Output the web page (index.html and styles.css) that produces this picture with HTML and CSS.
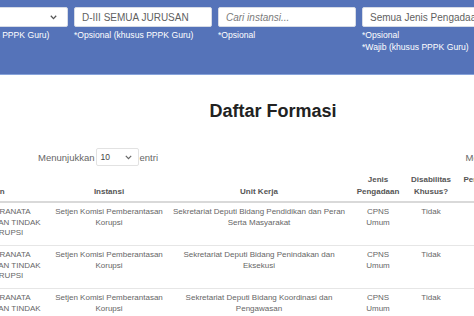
FILE: index.html
```html
<!DOCTYPE html>
<html lang="id">
<head>
<meta charset="utf-8">
<title>Daftar Formasi</title>
<link rel="stylesheet" href="styles.css">
</head>
<body>
<div class="page">
  <section class="filters">
    <div class="field">
      <div class="box select">
        <span class="val">Semua</span>
        <svg class="chev" width="7" height="5" viewBox="0 0 7 5"><path d="M0.8 0.8 L3.5 3.6 L6.2 0.8" fill="none" stroke="#555" stroke-width="1.3"/></svg>
      </div>
      <p class="hint">*Opsional (khusus PPPK Guru)</p>
    </div>
    <div class="field">
      <div class="box"><span class="val">D-III SEMUA JURUSAN</span></div>
      <p class="hint">*Opsional (khusus PPPK Guru)</p>
    </div>
    <div class="field">
      <div class="box"><span class="val ph">Cari instansi...</span></div>
      <p class="hint">*Opsional</p>
    </div>
    <div class="field">
      <div class="box select">
        <span class="val">Semua Jenis Pengadaan</span>
        <svg class="chev" width="7" height="5" viewBox="0 0 7 5"><path d="M0.8 0.8 L3.5 3.6 L6.2 0.8" fill="none" stroke="#555" stroke-width="1.3"/></svg>
      </div>
      <p class="hint">*Opsional</p>
      <p class="hint">*Wajib (khusus PPPK Guru)</p>
    </div>
  </section>

  <h1 class="title">Daftar Formasi</h1>

  <div class="controls">
    <div class="length">
      <span>Menunjukkan</span>
      <span class="len-select">10
        <svg width="7" height="5" viewBox="0 0 7 5"><path d="M0.8 0.8 L3.5 3.6 L6.2 0.8" fill="none" stroke="#666" stroke-width="1.2"/></svg>
      </span>
      <span>entri</span>
    </div>
    <div class="search">
      <span>Mencari:</span>
      <span class="search-box"></span>
    </div>
  </div>

  <table class="formasi">
    <thead>
      <tr>
        <th class="c1">Jabatan</th>
        <th class="c2">Instansi</th>
        <th class="c3">Unit Kerja</th>
        <th class="c4">Jenis Pengadaan</th>
        <th class="c5">Disabilitas Khusus?</th>
        <th class="c6">Penghasilan (Rp)</th>
      </tr>
    </thead>
    <tbody>
      <tr>
        <td>PENYULUH PRANATA PEMBERANTASAN TINDAK PIDANA KORUPSI</td>
        <td>Setjen Komisi Pemberantasan Korupsi</td>
        <td>Sekretariat Deputi Bidang Pendidikan dan Peran Serta Masyarakat</td>
        <td>CPNS Umum</td>
        <td>Tidak</td>
        <td>-</td>
      </tr>
      <tr>
        <td>PENYULUH PRANATA PEMBERANTASAN TINDAK PIDANA KORUPSI</td>
        <td>Setjen Komisi Pemberantasan Korupsi</td>
        <td>Sekretariat Deputi Bidang Penindakan dan Eksekusi</td>
        <td>CPNS Umum</td>
        <td>Tidak</td>
        <td>-</td>
      </tr>
      <tr>
        <td>PENYULUH PRANATA PEMBERANTASAN TINDAK PIDANA KORUPSI</td>
        <td>Setjen Komisi Pemberantasan Korupsi</td>
        <td>Sekretariat Deputi Bidang Koordinasi dan Pengawasan</td>
        <td>CPNS Umum</td>
        <td>Tidak</td>
        <td>-</td>
      </tr>
    </tbody>
  </table>
</div>
</body>
</html>
```

FILE: styles.css
```css
html, body {
  margin: 0;
  padding: 0;
  background: #ffffff;
  overflow: hidden;
}

body {
  font-family: "Liberation Sans", Arial, sans-serif;
  color: #666;
}

.page {
  width: 706px;
  margin-left: -80px;
}

/* ---------- filter band ---------- */
.filters {
  box-sizing: border-box;
  height: 75px;
  background: #5573b9;
  border-bottom: 1px solid #87a3da;
  padding: 7px 0 0 10px;
  display: grid;
  grid-template-columns: repeat(4, 138px);
  column-gap: 6px;
  align-items: start;
}

.field {
  display: flex;
  flex-direction: column;
}

.box {
  box-sizing: border-box;
  height: 20px;
  background: #fff;
  border: 1px solid #d6dbe6;
  border-radius: 2px;
  padding: 0 7px;
  display: flex;
  align-items: center;
  justify-content: space-between;
  overflow: hidden;
  white-space: nowrap;
}

.val {
  font-size: 10px;
  color: #5f5f5f;
}

.val.ph {
  font-style: italic;
  color: #7a7a7a;
}

.chev {
  flex: none;
  margin-right: 3px;
}

.hint {
  margin: 0;
  font-size: 8.6px;
  line-height: 12px;
  color: #ffffff;
  white-space: nowrap;
}

.field .hint:first-of-type {
  margin-top: 2px;
}

/* ---------- title ---------- */
.title {
  margin: 25px 0 0;
  text-align: center;
  font-size: 18px;
  line-height: 22px;
  font-weight: bold;
  color: #222;
}

/* ---------- controls ---------- */
.controls {
  margin-top: 26px;
  padding-left: 118px;
  display: flex;
  justify-content: space-between;
  align-items: center;
  font-size: 9.5px;
  color: #666;
}

.length {
  display: flex;
  align-items: center;
  gap: 1px;
}

.len-select {
  box-sizing: border-box;
  width: 43px;
  height: 18px;
  border: 1px solid #e2e2e2;
  border-radius: 2px;
  padding: 0 6px 0 4px;
  display: flex;
  align-items: center;
  justify-content: space-between;
  font-size: 8.5px;
  color: #444;
}

.search {
  display: flex;
  align-items: center;
  gap: 4px;
}

.search-box {
  box-sizing: border-box;
  width: 120px;
  height: 18px;
  border: 1px solid #e2e2e2;
  border-radius: 2px;
}

/* ---------- table ---------- */
.formasi {
  margin: 4px 0 0 8px;
  border-collapse: collapse;
  table-layout: fixed;
  width: 589px;
  font-size: 8px;
}

.formasi th,
.formasi td {
  box-sizing: border-box;
  padding: 4px 4px;
  text-align: center;
}

.formasi th {
  vertical-align: bottom;
  font-weight: bold;
  color: #555;
  line-height: 11.5px;
  border-bottom: 2px solid #d9d9d9;
}

.formasi td {
  vertical-align: top;
  color: #666;
  line-height: 10.67px;
  padding-bottom: 6px;
  border-bottom: 1px solid #e6e6e6;
}

.c1 { width: 123px; }
.c2 { width: 116px; }
.c3 { width: 184px; }
.c4 { width: 54px; }
.c5 { width: 52px; }
.c6 { width: 60px; }
```
